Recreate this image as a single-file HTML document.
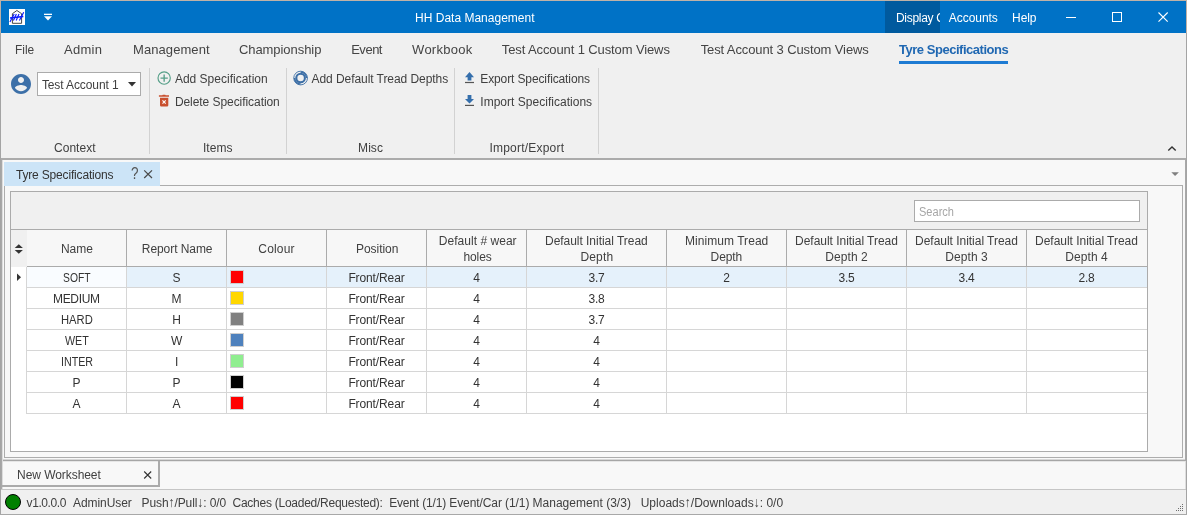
<!DOCTYPE html>
<html lang="en"><head><meta charset="utf-8"><title>HH Data Management</title>
<style>
html,body{margin:0;padding:0;background:#f0f0f0;}
body{width:1187px;height:515px;overflow:hidden;font:12px/12px 'Liberation Sans',sans-serif;}
#app{position:relative;width:1187px;height:515px;overflow:hidden;background:#f0f0f0;}
#app div,#app svg,#app span{position:absolute;box-sizing:border-box;}
.t{white-space:pre;line-height:12px;font-size:12px;}
#app{will-change:transform;}
.titlebar{left:0;top:0;width:1187px;height:33px;background:#0072c6;}
.dispbox{left:885px;top:1px;width:55px;height:32px;background:#005a9e;overflow:hidden;}
.dispbox span{white-space:pre;color:#fff;line-height:12px;}
.bt{left:0;top:0;width:1187px;height:1px;background:#bfb2a7;}
.bl{left:0;top:0;width:1px;height:515px;background:linear-gradient(#bfb1a6 0 33px,#a4a4a4 33px 515px);}
.br{left:1186px;top:0;width:1px;height:515px;background:linear-gradient(#bfb1a6 0 33px,#a4a4a4 33px 515px);}
.bb{left:0;top:514px;width:1187px;height:1px;background:#a8a8a8;}
.underline{left:899px;top:61px;width:109px;height:3px;background:#1e7bd3;}
.combo{left:37px;top:72px;width:104px;height:24px;background:#fff;border:1px solid #ababab;}
.sep{top:68px;width:1px;height:86px;background:#d2d2d2;}
.ribline{left:0;top:158px;width:1187px;height:2px;background:#ababab;}
.doc{left:0;top:160px;width:1187px;height:300px;background:#f8f8f8;}
.doctab{left:4px;top:162px;width:156px;height:24px;background:#cce4f7;}
.frame{left:4px;top:185px;width:1179px;height:273px;border:1px solid #adadad;background:#f8f8f8;}
.box{left:10px;top:191px;width:1138px;height:261px;border:1px solid #ababab;background:#fff;}
.spanel{left:11px;top:192px;width:1136px;height:37px;background:#f0f0f0;}
.search{left:914px;top:200px;width:226px;height:22px;background:#fff;border:1px solid #ababab;}
.hdr{left:11px;top:229px;width:1136px;height:38px;background:#f7f7f7;border-top:1px solid #ababab;border-bottom:1px solid #ababab;}
.hind{left:11px;top:230px;width:16px;height:37px;background:#f0f0f0;}
.hl{top:230px;width:1px;height:36px;background:#ababab;}
.vl{top:267px;width:1px;height:147px;background:#d6d6d6;}
.rl{left:27px;width:1120px;height:1px;background:#d6d6d6;}
.sel{left:127px;top:267px;width:1020px;height:20px;background:#e5f1fb;}
.foc{left:27px;top:267px;width:99px;height:20px;background:#f9fcff;}
.sw{left:230px;width:14px;height:14px;border:1px solid #cfcfcf;}
.botline{left:0;top:459px;width:1187px;height:3px;background:linear-gradient(#d6d6d6 0 1px,#a6a6a6 1px 2px,#e6e6e6 2px 3px);}
.botstrip{left:0;top:462px;width:1187px;height:27px;background:#f8f8f8;}
.bottab{z-index:2;left:2px;top:461px;width:158px;height:26px;border-right:2px solid #ababab;border-bottom:2px solid #ababab;background:transparent;}
.statline{left:0;top:489px;width:1187px;height:1px;background:#c6c6c6;}
.status{left:0;top:490px;width:1187px;height:24px;background:#f0f0f0;}
.led{left:5px;top:494px;width:16px;height:16px;border-radius:50%;background:#008000;border:1px solid #000;}
.dl{left:1px;top:160px;width:2px;height:329px;background:linear-gradient(90deg,#a8a8a8 0 1px,#dcdcdc 1px 2px);}
.dr{left:1185px;top:160px;width:1px;height:329px;background:linear-gradient(#a8a8a8 0 301px,#dedede 301px 329px);}
.ar{font-style:normal;display:inline-block;transform:scaleY(1.150);transform-origin:50% 84%;font-weight:700;}

</style></head>
<body>
<div id="app">
<div class="titlebar"></div>
<div class="dispbox"><span id="disp" style="left:11.0px;top:11px;letter-spacing:-0.3px">Display Options</span></div>
<!-- app icon -->
<svg style="left:9px;top:9px" width="16" height="16" viewBox="0 0 16 16">
  <rect width="16" height="16" fill="#fff"/>
  <path d="M3.400 14.300V4.700L7.900 1.500l4.700 3.200v9.600z" fill="none" stroke="#3c3c3c" stroke-width="0.950"/>
  <g stroke="#0a18ff" stroke-width="1.150" fill="none"><path d="M0.900 13L5.200 5.100M4.400 11.400L7.400 5.100M7.200 11.400L10 5.100M10.400 11.600L14.700 3.300"/><path d="M1 8.900L14.300 7.500" stroke-width="1.500"/></g>
</svg>
<!-- quick access arrow -->
<svg style="left:43px;top:12px" width="10" height="10" viewBox="0 0 10 10"><rect x="1" y="1.7" width="8" height="1.3" fill="#fff"/><path d="M1 4.3h8L5 8.4z" fill="#fff"/></svg>
<!-- window buttons -->
<svg style="left:1060px;top:6px" width="120" height="22" viewBox="0 0 120 22" fill="none" stroke="#fff" stroke-width="1">
  <path d="M6 11.5h10"/>
  <rect x="52.5" y="6.5" width="9" height="9"/>
  <path d="M98.5 6.5l9.2 9.2M107.7 6.5l-9.2 9.2" stroke-width="1.1"/>
</svg>
<div class="underline"></div>
<!-- account icon -->
<svg style="left:9px;top:72px" width="24" height="24" viewBox="0 0 24 24"><path fill="#3d70a8" d="M12 2C6.48 2 2 6.48 2 12s4.48 10 10 10 10-4.48 10-10S17.52 2 12 2zm0 3c1.66 0 3 1.34 3 3s-1.34 3-3 3-3-1.34-3-3 1.34-3 3-3zm0 14.2c-2.5 0-4.710-1.28-6-3.220.03-1.99 4-3.08 6-3.08 1.990 0 5.970 1.090 6 3.080-1.290 1.940-3.5 3.220-6 3.220z"/></svg>
<div class="combo"></div>
<svg style="left:127px;top:81px" width="10" height="7" viewBox="0 0 10 7"><path d="M1 1h8L5 5.6z" fill="#333"/></svg>
<div class="sep" style="left:149px"></div>
<div class="sep" style="left:286px"></div>
<div class="sep" style="left:454px"></div>
<div class="sep" style="left:598px"></div>
<!-- add icon -->
<svg style="left:156px;top:70px" width="16" height="16" viewBox="0 0 16 16" fill="none" stroke="#559f88" stroke-width="1.150"><circle cx="8.150" cy="8.050" r="6.150"/><path d="M4.500 8.050h7.300M8.150 4.400v7.300" stroke-width="1.350"/></svg>
<!-- delete icon -->
<svg style="left:157px;top:93px" width="14" height="15" viewBox="0 0 14 15"><path fill="#c9502f" d="M1.900 2.300h3.400l.5-.6h2.400l.5.600h3.300v1.500H1.900zM3 4.700h8.300v7.600a1.300 1.300 0 0 1-1.300 1.300H4.300a1.300 1.300 0 0 1-1.300-1.300z"/><path d="M5.500 7.400l3.200 3.200M8.700 7.400l-3.200 3.200" stroke="#fff" stroke-width="1.150" fill="none"/></svg>
<!-- ring icon -->
<svg style="left:292px;top:70px" width="17" height="17" viewBox="0 0 17 17" fill="none" stroke="#3d6fa6"><circle cx="8.600" cy="8" r="4.300" stroke-width="2.100"/><circle cx="8.600" cy="8.050" r="6.850" stroke-width="0.900"/><path d="M8.600 2A6 6 0 0 1 14.600 8M8.600 14A6 6 0 0 1 2.600 8" stroke-width="1.600"/></svg>
<!-- export / import -->
<svg style="left:464px;top:71px" width="12" height="13" viewBox="0 0 12 13"><path fill="#356fac" d="M5.500 1.100L10 6.200H7.400v3.300H3.600V6.200H1z"/><rect x="1" y="10.900" width="9" height="1.200" fill="#555"/></svg>
<svg style="left:464px;top:94px" width="12" height="13" viewBox="0 0 12 13"><path fill="#356fac" d="M3.600 1h3.800v3.900H10L5.500 9.500 1 4.900h2.600z"/><rect x="1" y="10.800" width="9" height="1.200" fill="#555"/></svg>
<!-- chevron -->
<svg style="left:1166px;top:144px" width="12" height="9" viewBox="0 0 12 9"><path d="M2.300 6.500L6 2.900l3.700 3.600" fill="none" stroke="#333" stroke-width="1.400"/></svg>
<div class="ribline"></div>
<div class="doc"></div>
<div class="frame"></div>
<div class="doctab"></div>
<svg style="left:142px;top:168px" width="12" height="12" viewBox="0 0 12 12"><path d="M2.200 2.400l7.800 7.600M10 2.400l-7.800 7.600" stroke="#4a4a4a" stroke-width="1.250" fill="none"/></svg>
<svg style="left:1170px;top:171px" width="10" height="6" viewBox="0 0 10 6"><path d="M1.300 1.300h7.600L5.100 5.100z" fill="#808080"/></svg>
<div class="box"></div>
<div class="spanel"></div>
<div class="search"></div>
<div class="hdr"></div>
<div class="hind"></div>
<svg style="left:13px;top:243px" width="12" height="12" viewBox="0 0 12 12"><path d="M1.700 5L5.800 1.200 9.900 5zM1.700 7L5.800 10.800 9.900 7z" fill="#333"/></svg>
<div class="hl" style="left:126px"></div><div class="hl" style="left:226px"></div><div class="hl" style="left:326px"></div><div class="hl" style="left:426px"></div><div class="hl" style="left:526px"></div><div class="hl" style="left:666px"></div><div class="hl" style="left:786px"></div><div class="hl" style="left:906px"></div><div class="hl" style="left:1026px"></div>
<div class="sel"></div><div class="foc"></div>
<div class="vl" style="left:26px"></div><div class="vl" style="left:126px"></div><div class="vl" style="left:226px"></div><div class="vl" style="left:326px"></div><div class="vl" style="left:426px"></div><div class="vl" style="left:526px"></div><div class="vl" style="left:666px"></div><div class="vl" style="left:786px"></div><div class="vl" style="left:906px"></div><div class="vl" style="left:1026px"></div>
<div class="rl" style="top:287px"></div><div class="rl" style="top:308px"></div><div class="rl" style="top:329px"></div><div class="rl" style="top:350px"></div><div class="rl" style="top:371px"></div><div class="rl" style="top:392px"></div><div class="rl" style="top:413px"></div>
<svg style="left:16px;top:272px" width="6" height="10" viewBox="0 0 6 10"><path d="M1 1.500L5 5.200 1 9z" fill="#333"/></svg>
<div class="sw" style="top:270px;background:#ff0000"></div>
<div class="sw" style="top:291px;background:#ffd700"></div>
<div class="sw" style="top:312px;background:#808080"></div>
<div class="sw" style="top:333px;background:#4f81bd"></div>
<div class="sw" style="top:354px;background:#90ee90"></div>
<div class="sw" style="top:375px;background:#000000"></div>
<div class="sw" style="top:396px;background:#ff0000"></div>
<div class="botstrip"></div>
<div class="botline"></div>
<div class="bottab"></div>
<svg style="left:142px;top:469px" width="12" height="12" viewBox="0 0 12 12"><path d="M2.200 2.500l7 7M9.200 2.500l-7 7" stroke="#333" stroke-width="1.100" fill="none"/></svg>
<div class="statline"></div>
<div class="status"></div>
<div class="led"></div>
<svg style="left:1174px;top:502px" width="11" height="11" viewBox="0 0 11 11" fill="#6e6e6e"><rect x="8" y="2" width="1" height="1"/><rect x="6" y="4" width="1" height="1"/><rect x="8" y="4" width="1" height="1"/><rect x="4" y="6" width="1" height="1"/><rect x="6" y="6" width="1" height="1"/><rect x="8" y="6" width="1" height="1"/><rect x="2" y="8" width="1" height="1"/><rect x="4" y="8" width="1" height="1"/><rect x="6" y="8" width="1" height="1"/><rect x="8" y="8" width="1" height="1"/></svg>
<div class="dl"></div><div class="dr"></div>
<div class="bt"></div><div class="bl"></div><div class="br"></div><div class="bb"></div>

<span class="t" id="t0" style="left:415.10px;top:12px;letter-spacing:0.001px;color:#fff;">HH Data Management</span>
<span class="t" id="t1" style="left:948.80px;top:12px;letter-spacing:-0.051px;color:#fff;">Accounts</span>
<span class="t" id="t2" style="left:1012.10px;top:12px;letter-spacing:-0.096px;color:#fff;">Help</span>
<span class="t" id="t3" style="left:15.30px;top:43px;letter-spacing:0.000px;color:#444;font-size:13px;line-height:13px;transform:scaleX(0.9163);transform-origin:0 0;">File</span>
<span class="t" id="t4" style="left:64.00px;top:43px;letter-spacing:0.285px;color:#444;font-size:13px;line-height:13px;">Admin</span>
<span class="t" id="t5" style="left:133.00px;top:43px;letter-spacing:0.079px;color:#444;font-size:13px;line-height:13px;">Management</span>
<span class="t" id="t6" style="left:238.90px;top:43px;letter-spacing:-0.055px;color:#444;font-size:13px;line-height:13px;">Championship</span>
<span class="t" id="t7" style="left:351.20px;top:43px;letter-spacing:-0.487px;color:#444;font-size:13px;line-height:13px;">Event</span>
<span class="t" id="t8" style="left:412.10px;top:43px;letter-spacing:0.258px;color:#444;font-size:13px;line-height:13px;">Workbook</span>
<span class="t" id="t9" style="left:501.80px;top:43px;letter-spacing:-0.112px;color:#444;font-size:13px;line-height:13px;">Test Account 1 Custom Views</span>
<span class="t" id="t10" style="left:700.70px;top:43px;letter-spacing:-0.112px;color:#444;font-size:13px;line-height:13px;">Test Account 3 Custom Views</span>
<span class="t" id="t11" style="left:899.00px;top:43px;letter-spacing:-0.475px;color:#2068b2;font-weight:700;font-size:13px;line-height:13px;">Tyre Specifications</span>
<span class="t" id="t12" style="left:41.90px;top:79px;letter-spacing:-0.104px;color:#404040;">Test Account 1</span>
<span class="t" id="t13" style="left:174.90px;top:73px;letter-spacing:0.004px;color:#404040;">Add Specification</span>
<span class="t" id="t14" style="left:174.90px;top:96px;letter-spacing:-0.061px;color:#404040;">Delete Specification</span>
<span class="t" id="t15" style="left:311.50px;top:73px;letter-spacing:-0.061px;color:#404040;">Add Default Tread Depths</span>
<span class="t" id="t16" style="left:480.30px;top:73px;letter-spacing:-0.118px;color:#404040;">Export Specifications</span>
<span class="t" id="t17" style="left:480.30px;top:96px;letter-spacing:0.020px;color:#404040;">Import Specifications</span>
<span class="t" id="t18" style="left:53.90px;top:142px;letter-spacing:0.073px;color:#404040;">Context</span>
<span class="t" id="t19" style="left:203.00px;top:142px;letter-spacing:0.039px;color:#404040;">Items</span>
<span class="t" id="t20" style="left:358.10px;top:142px;letter-spacing:0.043px;color:#404040;">Misc</span>
<span class="t" id="t21" style="left:489.40px;top:142px;letter-spacing:0.214px;color:#404040;">Import/Export</span>
<span class="t" id="t22" style="left:15.90px;top:169px;letter-spacing:-0.168px;color:#333;">Tyre Specifications</span>
<span class="t" id="t23" style="left:131.20px;top:166px;letter-spacing:0.000px;color:#555;font-size:16px;line-height:16px;transform:scaleX(0.8421);transform-origin:0 0;">?</span>
<span class="t" id="t24" style="left:17.10px;top:469px;letter-spacing:-0.065px;color:#404040;">New Worksheet</span>
<span class="t" id="t25" style="left:919.30px;top:206px;letter-spacing:0.000px;color:#a6a6a6;transform:scaleX(0.9203);transform-origin:0 0;">Search</span>
<span class="t" id="t26" style="left:26.60px;top:497px;letter-spacing:-0.415px;color:#404040;">v1.0.0.0</span>
<span class="t" id="t27" style="left:73.10px;top:497px;letter-spacing:-0.082px;color:#404040;">AdminUser</span>
<span class="t" id="t28" style="left:141.50px;top:497px;letter-spacing:-0.091px;color:#404040;">Push<i class="ar">↑</i>/Pull<i class="ar">↓</i>: 0/0</span>
<span class="t" id="t29" style="left:232.50px;top:497px;letter-spacing:-0.255px;color:#404040;">Caches (Loaded/Requested):</span>
<span class="t" id="t30" style="left:389.20px;top:497px;letter-spacing:-0.170px;color:#404040;">Event (1/1)</span>
<span class="t" id="t31" style="left:449.30px;top:497px;letter-spacing:-0.091px;color:#404040;">Event/Car (1/1)</span>
<span class="t" id="t32" style="left:532.50px;top:497px;letter-spacing:0.023px;color:#404040;">Management (3/3)</span>
<span class="t" id="t33" style="left:640.70px;top:497px;letter-spacing:0.013px;color:#404040;">Uploads<i class="ar">↑</i>/Downloads<i class="ar">↓</i>: 0/0</span>
<span class="t" id="t34" style="left:60.90px;top:243px;letter-spacing:-0.005px;color:#404040;">Name</span>
<span class="t" id="t35" style="left:141.80px;top:243px;letter-spacing:-0.067px;color:#404040;">Report Name</span>
<span class="t" id="t36" style="left:258.30px;top:243px;letter-spacing:0.168px;color:#404040;">Colour</span>
<span class="t" id="t37" style="left:356.00px;top:243px;letter-spacing:-0.043px;color:#404040;">Position</span>
<span class="t" id="t38" style="left:438.80px;top:235px;letter-spacing:0.033px;color:#404040;">Default # wear</span>
<span class="t" id="t39" style="left:463.40px;top:251px;letter-spacing:-0.072px;color:#404040;">holes</span>
<span class="t" id="t40" style="left:545.00px;top:235px;letter-spacing:-0.035px;color:#404040;">Default Initial Tread</span>
<span class="t" id="t41" style="left:580.40px;top:251px;letter-spacing:0.167px;color:#404040;">Depth</span>
<span class="t" id="t42" style="left:684.90px;top:235px;letter-spacing:0.059px;color:#404040;">Minimum Tread</span>
<span class="t" id="t43" style="left:710.60px;top:251px;letter-spacing:-0.083px;color:#404040;">Depth</span>
<span class="t" id="t44" style="left:795.10px;top:235px;letter-spacing:-0.030px;color:#404040;">Default Initial Tread</span>
<span class="t" id="t45" style="left:825.20px;top:251px;letter-spacing:0.095px;color:#404040;">Depth 2</span>
<span class="t" id="t46" style="left:915.10px;top:235px;letter-spacing:-0.030px;color:#404040;">Default Initial Tread</span>
<span class="t" id="t47" style="left:945.20px;top:251px;letter-spacing:0.095px;color:#404040;">Depth 3</span>
<span class="t" id="t48" style="left:1035.10px;top:235px;letter-spacing:-0.030px;color:#404040;">Default Initial Tread</span>
<span class="t" id="t49" style="left:1065.20px;top:251px;letter-spacing:0.095px;color:#404040;">Depth 4</span>
<span class="t" id="t50" style="left:62.50px;top:272px;letter-spacing:0.000px;color:#333;transform:scaleX(0.8594);transform-origin:0 0;">SOFT</span>
<span class="t" id="t51" style="left:172.59px;top:272px;letter-spacing:-0.218px;color:#333;">S</span>
<span class="t" id="t52" style="left:348.40px;top:272px;letter-spacing:-0.118px;color:#333;">Front/Rear</span>
<span class="t" id="t53" style="left:473.26px;top:272px;letter-spacing:-0.218px;color:#333;">4</span>
<span class="t" id="t54" style="left:588.47px;top:272px;letter-spacing:-0.218px;color:#333;">3.7</span>
<span class="t" id="t55" style="left:723.26px;top:272px;letter-spacing:-0.218px;color:#333;">2</span>
<span class="t" id="t56" style="left:838.47px;top:272px;letter-spacing:-0.218px;color:#333;">3.5</span>
<span class="t" id="t57" style="left:958.47px;top:272px;letter-spacing:-0.218px;color:#333;">3.4</span>
<span class="t" id="t58" style="left:1078.47px;top:272px;letter-spacing:-0.218px;color:#333;">2.8</span>
<span class="t" id="t59" style="left:53.00px;top:293px;letter-spacing:-0.314px;color:#333;">MEDIUM</span>
<span class="t" id="t60" style="left:171.60px;top:293px;letter-spacing:-0.218px;color:#333;">M</span>
<span class="t" id="t61" style="left:348.40px;top:293px;letter-spacing:-0.118px;color:#333;">Front/Rear</span>
<span class="t" id="t62" style="left:473.26px;top:293px;letter-spacing:-0.218px;color:#333;">4</span>
<span class="t" id="t63" style="left:588.47px;top:293px;letter-spacing:-0.218px;color:#333;">3.8</span>
<span class="t" id="t64" style="left:60.50px;top:314px;letter-spacing:0.000px;color:#333;transform:scaleX(0.9349);transform-origin:0 0;">HARD</span>
<span class="t" id="t65" style="left:172.26px;top:314px;letter-spacing:-0.218px;color:#333;">H</span>
<span class="t" id="t66" style="left:348.40px;top:314px;letter-spacing:-0.118px;color:#333;">Front/Rear</span>
<span class="t" id="t67" style="left:473.26px;top:314px;letter-spacing:-0.218px;color:#333;">4</span>
<span class="t" id="t68" style="left:588.47px;top:314px;letter-spacing:-0.218px;color:#333;">3.7</span>
<span class="t" id="t69" style="left:64.50px;top:335px;letter-spacing:0.000px;color:#333;transform:scaleX(0.8923);transform-origin:0 0;">WET</span>
<span class="t" id="t70" style="left:170.94px;top:335px;letter-spacing:-0.218px;color:#333;">W</span>
<span class="t" id="t71" style="left:348.40px;top:335px;letter-spacing:-0.118px;color:#333;">Front/Rear</span>
<span class="t" id="t72" style="left:473.26px;top:335px;letter-spacing:-0.218px;color:#333;">4</span>
<span class="t" id="t73" style="left:593.26px;top:335px;letter-spacing:-0.218px;color:#333;">4</span>
<span class="t" id="t74" style="left:60.50px;top:356px;letter-spacing:0.000px;color:#333;transform:scaleX(0.8917);transform-origin:0 0;">INTER</span>
<span class="t" id="t75" style="left:174.93px;top:356px;letter-spacing:-0.218px;color:#333;">I</span>
<span class="t" id="t76" style="left:348.40px;top:356px;letter-spacing:-0.118px;color:#333;">Front/Rear</span>
<span class="t" id="t77" style="left:473.26px;top:356px;letter-spacing:-0.218px;color:#333;">4</span>
<span class="t" id="t78" style="left:593.26px;top:356px;letter-spacing:-0.218px;color:#333;">4</span>
<span class="t" id="t79" style="left:72.59px;top:377px;letter-spacing:-0.218px;color:#333;">P</span>
<span class="t" id="t80" style="left:172.59px;top:377px;letter-spacing:-0.218px;color:#333;">P</span>
<span class="t" id="t81" style="left:348.40px;top:377px;letter-spacing:-0.118px;color:#333;">Front/Rear</span>
<span class="t" id="t82" style="left:473.26px;top:377px;letter-spacing:-0.218px;color:#333;">4</span>
<span class="t" id="t83" style="left:593.26px;top:377px;letter-spacing:-0.218px;color:#333;">4</span>
<span class="t" id="t84" style="left:72.59px;top:398px;letter-spacing:-0.218px;color:#333;">A</span>
<span class="t" id="t85" style="left:172.59px;top:398px;letter-spacing:-0.218px;color:#333;">A</span>
<span class="t" id="t86" style="left:348.40px;top:398px;letter-spacing:-0.118px;color:#333;">Front/Rear</span>
<span class="t" id="t87" style="left:473.26px;top:398px;letter-spacing:-0.218px;color:#333;">4</span>
<span class="t" id="t88" style="left:593.26px;top:398px;letter-spacing:-0.218px;color:#333;">4</span>
</div>
</body></html>
